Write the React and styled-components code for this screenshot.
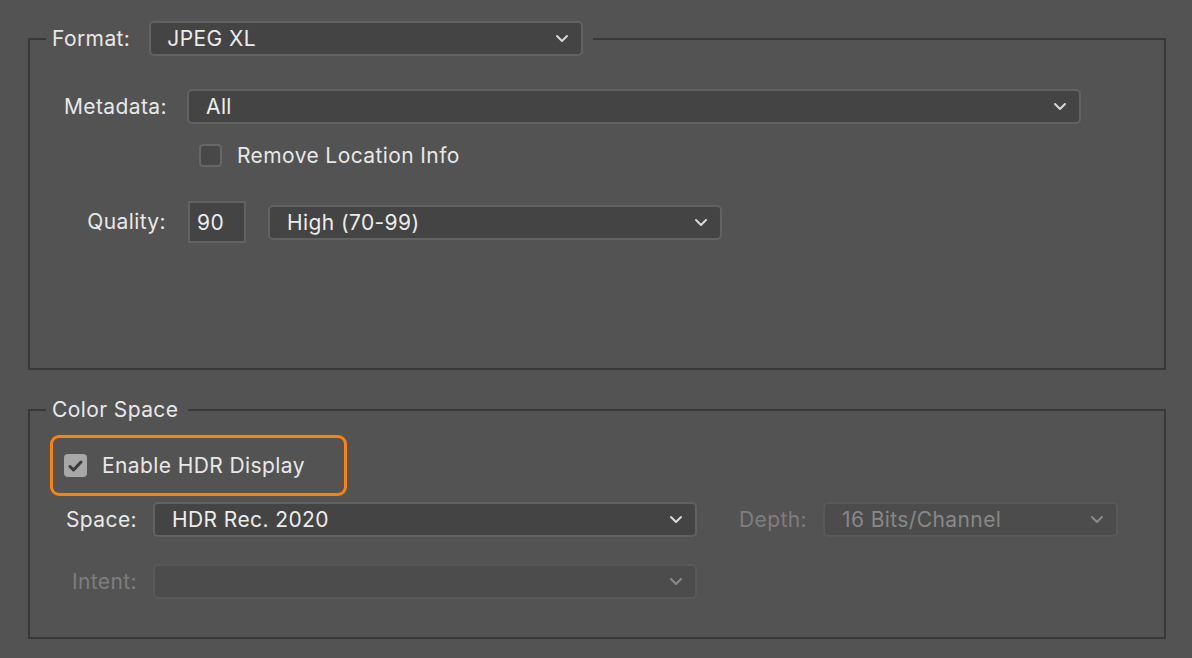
import React from "react";
import styled, { createGlobalStyle } from "styled-components";

const GlobalStyle = createGlobalStyle`
  html, body {
    margin: 0;
    padding: 0;
    background: #535353;
  }
  body {
    font-family: Inter, "Noto Sans", "Liberation Sans", sans-serif;
    color: #e6e6e6;
    letter-spacing: 0.4px;
  }
`;

const Page = styled.div`
  width: 1192px;
  height: 658px;
  box-sizing: border-box;
  padding: 21px 0 0 28px;
  background: #535353;
  overflow: hidden;
`;

const Group = styled.fieldset`
  width: 1138px;
  box-sizing: border-box;
  margin: ${(p) => p.$top || "0"} 0 0 0;
  padding: 0;
  border: 2px solid #383838;
  min-inline-size: 0;
`;

const Legend = styled.legend`
  margin-left: 16px;
  padding: 0 ${(p) => p.$padRight || "10px"} 0 6px;
  display: flex;
  align-items: center;
  gap: 19px;
`;

const Title = styled.span`
  font-size: 21px;
  line-height: 24px;
  color: #e8e8e8;
`;

const Label = styled.span`
  font-size: 21px;
  line-height: 24px;
  color: ${(p) => (p.$dim ? "#7e7e7e" : "#e8e8e8")};
  text-align: right;
  white-space: nowrap;
`;

const Body = styled.div`
  display: flex;
  flex-direction: column;
  padding: ${(p) => p.$pad};
`;

const Row = styled.div`
  display: grid;
  grid-template-columns: ${(p) => p.$cols};
  column-gap: ${(p) => p.$gap || "20px"};
  align-items: center;
  margin-top: ${(p) => p.$top || "0"};
`;

const SelectBox = styled.div`
  box-sizing: border-box;
  width: ${(p) => p.$w};
  flex-shrink: 0;
  height: 35px;
  border: 2px solid ${(p) => (p.$dim ? "#595959" : "#626262")};
  border-radius: 5px;
  background: ${(p) => (p.$dim ? "#4c4c4c" : "#444444")};
  display: flex;
  align-items: center;
  justify-content: space-between;
  padding: 0 12px 0 ${(p) => p.$padLeft || "16px"};
  font-size: 21px;
  color: ${(p) => (p.$dim ? "#888888" : "#ececec")};
  white-space: nowrap;
`;

const Chevron = ({ dim }) => (
  <svg width="14" height="9" viewBox="0 0 14 9">
    <polyline
      points="2,2 7,7 12,2"
      fill="none"
      stroke={dim ? "#8a8a8a" : "#d8d8d8"}
      strokeWidth="2"
      strokeLinecap="round"
      strokeLinejoin="round"
    />
  </svg>
);

const Select = ({ w, dim, padLeft, children }) => (
  <SelectBox $w={w} $dim={dim} $padLeft={padLeft}>
    <span>{children}</span>
    <Chevron dim={dim} />
  </SelectBox>
);

const NumberField = styled.div`
  box-sizing: border-box;
  width: 58px;
  height: 42px;
  border: 2px solid #626262;
  background: #444444;
  display: flex;
  align-items: center;
  padding-left: 7px;
  font-size: 21px;
  color: #ececec;
`;

const CheckRow = styled.label`
  display: flex;
  align-items: center;
  gap: 15px;
  font-size: 21px;
  color: #e8e8e8;
  padding-left: ${(p) => p.$indent || "0"};
`;

const Box = styled.span`
  box-sizing: border-box;
  width: 23px;
  height: 23px;
  border-radius: 4px;
  border: ${(p) => (p.$checked ? "none" : "2px solid #676767")};
  background: ${(p) => (p.$checked ? "#a8a8a8" : "#484848")};
  display: flex;
  align-items: center;
  justify-content: center;
`;

const Highlight = styled.div`
  box-sizing: border-box;
  width: 297px;
  height: 61px;
  margin-left: 20px;
  border: 3px solid #f5850f;
  border-radius: 9px;
  display: flex;
  align-items: center;
  padding-left: 11px;
`;

const DepthGroup = styled.div`
  display: flex;
  align-items: center;
  gap: 16px;
  padding-left: 26px;
`;

export default function App() {
  return (
    <>
      <GlobalStyle />
      <Page>
        <Group>
          <Legend>
            <Label>Format:</Label>
            <Select w="434px">JPEG XL</Select>
          </Legend>
          <Body $pad="33px 0 125px 0">
            <Row $cols="137px 894px">
              <Label>Metadata:</Label>
              <Select w="894px" padLeft="17px">All</Select>
            </Row>
            <Row $cols="137px auto" $top="19px">
              <span />
              <CheckRow $indent="12px">
                <Box />
                Remove Location Info
              </CheckRow>
            </Row>
            <Row $cols="136px 58px 454px" $gap="22px" $top="33px">
              <Label>Quality:</Label>
              <NumberField>90</NumberField>
              <Select w="454px" padLeft="17px">High (70-99)</Select>
            </Row>
          </Body>
        </Group>

        <Group $top="28px">
          <Legend $padRight="10px">
            <Title>Color Space</Title>
          </Legend>
          <Body $pad="13px 0 38px 0">
            <Highlight>
              <CheckRow>
                <Box $checked>
                  <svg width="15" height="12" viewBox="0 0 15 12">
                    <polyline
                      points="2,6.5 5.5,10 13,2"
                      fill="none"
                      stroke="#3a3a3a"
                      strokeWidth="3"
                      strokeLinecap="round"
                      strokeLinejoin="round"
                    />
                  </svg>
                </Box>
                Enable HDR Display
              </CheckRow>
            </Highlight>
            <Row $cols="107px 544px auto" $gap="16px" $top="6px">
              <Label>Space:</Label>
              <Select w="544px" padLeft="17px">HDR Rec. 2020</Select>
              <DepthGroup>
                <Label $dim>Depth:</Label>
                <Select w="295px" dim padLeft="17px">16 Bits/Channel</Select>
              </DepthGroup>
            </Row>
            <Row $cols="107px 544px" $gap="16px" $top="27px">
              <Label $dim>Intent:</Label>
              <Select w="544px" dim />
            </Row>
          </Body>
        </Group>
      </Page>
    </>
  );
}
